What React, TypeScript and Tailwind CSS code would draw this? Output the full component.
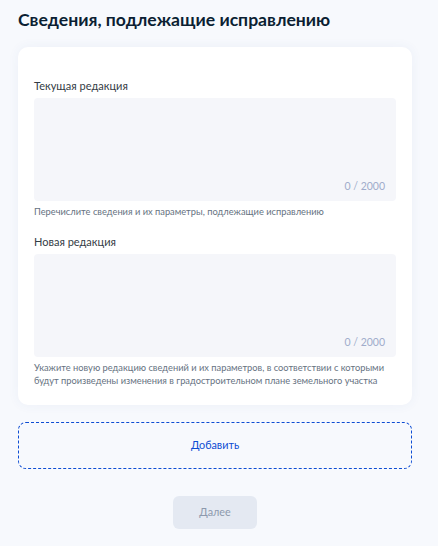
export default function App() {
  const fields = [
    {
      label: "Текущая редакция",
      hint: "Перечислите сведения и их параметры, подлежащие исправлению",
    },
    {
      label: "Новая редакция",
      hint: "Укажите новую редакцию сведений и их параметров, в соответствии с которыми будут произведены изменения в градостроительном плане земельного участка",
    },
  ];

  return (
    <div
      className="min-h-[546px] w-[438px] bg-[#f7f9fd] pl-[18px] pr-[26px] pt-[8px] pb-[17px]"
      style={{ fontFamily: "Lato, 'Noto Sans', sans-serif" }}
    >
      <h1 className="text-[17.6px] font-bold leading-[24px] text-[#0b1f33]">
        Сведения, подлежащие исправлению
      </h1>

      <div className="mt-[15px] rounded-[10px] bg-white px-4 pt-[31px] pb-[18px] shadow-[0_0_12px_rgba(50,80,150,0.06)]">
        {fields.map((f, i) => (
          <div key={i} className={i > 0 ? "mt-[16px]" : ""}>
            <label className="block text-[11px] leading-[16px] text-[#333c45]">
              {f.label}
            </label>
            <div className="relative mt-[4px] h-[103px] rounded-[4px] bg-[#f5f6fa]">
              <span className="absolute right-[11px] bottom-[6px] text-[10.5px] text-[#a0accb]">
                0 / 2000
              </span>
            </div>
            <p className="mt-[4px] text-[9.3px] leading-[13px] text-[#66727f]">
              {f.hint}
            </p>
          </div>
        ))}
      </div>

      <button className="mt-[17px] flex h-[47px] w-full items-center justify-center rounded-[8px] border border-dashed border-[#0d4cd3] text-[10.8px] text-[#0d4cd3]">
        Добавить
      </button>

      <div className="mt-[27px] flex justify-center">
        <button className="h-[33px] w-[84px] rounded-[6px] bg-[#e4e9f2] text-[10.8px] text-[#8d99ad]">
          Далее
        </button>
      </div>
    </div>
  );
}
